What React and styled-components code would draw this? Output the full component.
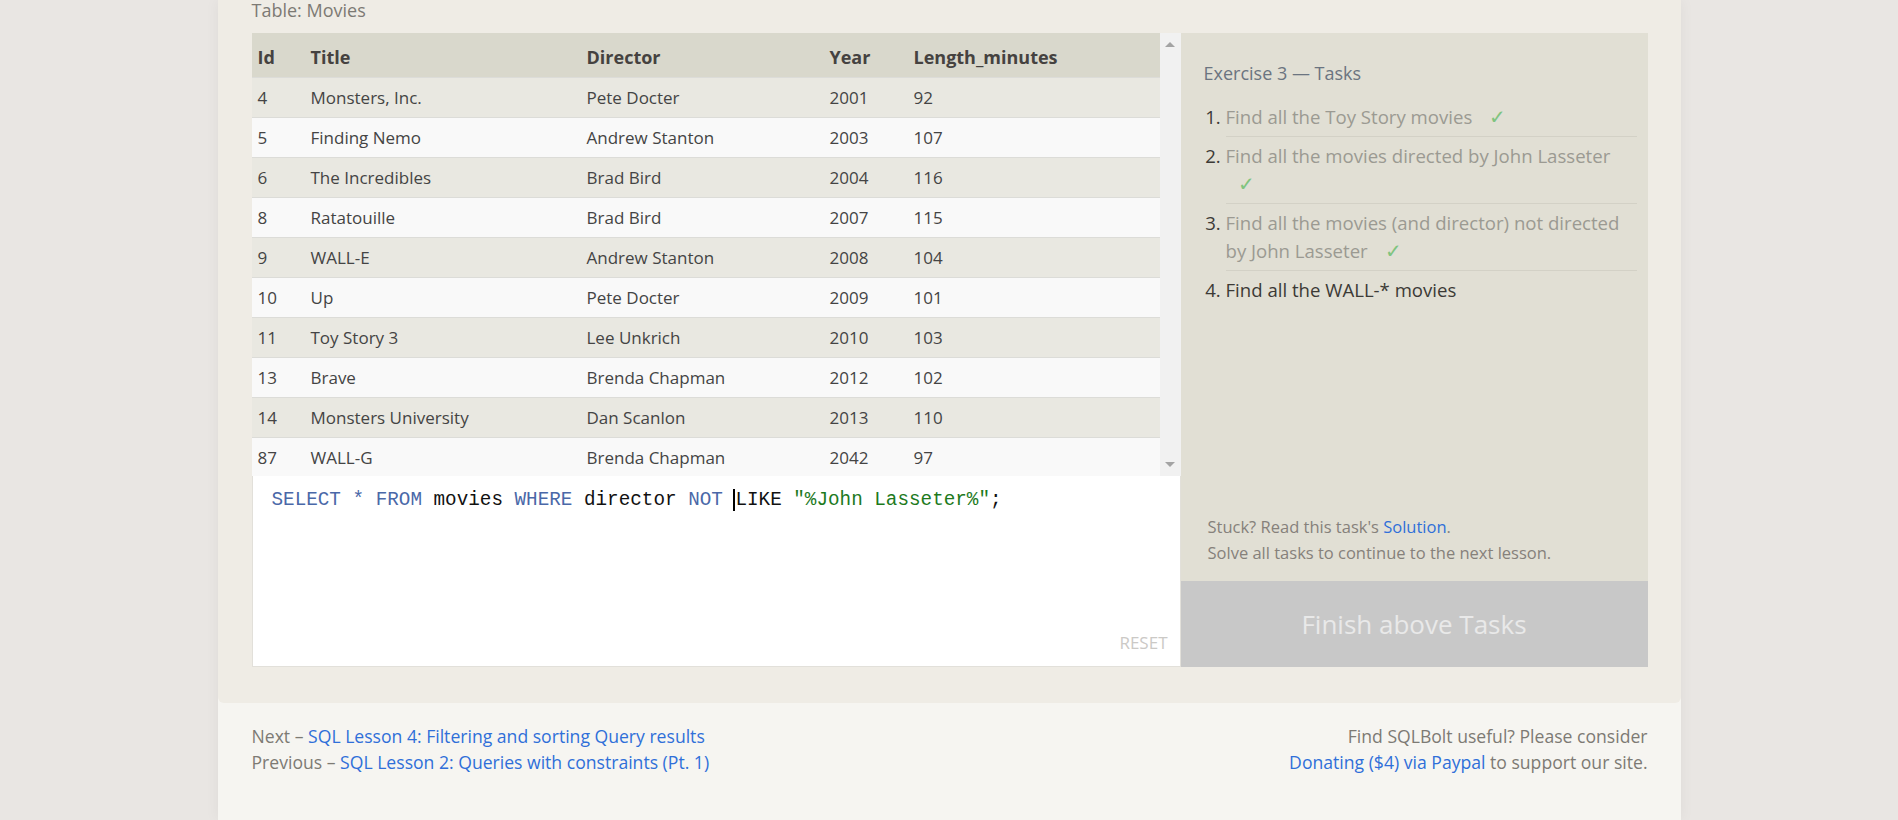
import React from "react";
import styled, { createGlobalStyle } from "styled-components";

const GlobalStyle = createGlobalStyle`
  html, body {
    margin: 0;
    padding: 0;
    background: #e9e6e3;
    font-family: "Open Sans", "Noto Sans", sans-serif;
    overflow: hidden;
  }
`;

const Page = styled.div`
  width: 1463px;
  margin: 0 auto;
  background: #f6f5f1;
  box-shadow: 0 0 14px rgba(0, 0, 0, 0.05);
  min-height: 820px;
`;

const Exercise = styled.section`
  background: #efece5;
  border-radius: 0 0 6px 6px;
  padding: 0 33px 36px 34px;
`;

const Caption = styled.div`
  font-size: 18px;
  line-height: 20px;
  color: #7d7a74;
  height: 33px;
`;

const Workspace = styled.div`
  display: flex;
  align-items: stretch;
`;

const LeftCol = styled.div`
  width: 929px;
  display: flex;
  flex-direction: column;
`;

const TableScroll = styled.div`
  display: flex;
  height: 443px;
  overflow: hidden;
`;

const Table = styled.table`
  width: 908px;
  border-collapse: collapse;
  table-layout: fixed;
  font-size: 17px;
  color: #444;
`;

const Th = styled.th`
  text-align: left;
  font-weight: 700;
  font-size: 18px;
  height: 44px;
  box-sizing: border-box;
  padding: 4px 0 0 6px;
  background: #d9d8cc;
  color: #454240;
`;

const Row = styled.tr`
  background: ${(p) => (p.odd ? "#e9e8e1" : "#f9f9f9")};
  border-top: 1px solid #dcdcd8;
`;

const Td = styled.td`
  height: 39px;
  padding: 0 0 0 6px;
  line-height: 39px;
`;

const Scrollbar = styled.div`
  width: 21px;
  background: #f1f1f1;
  display: flex;
  flex-direction: column;
  justify-content: space-between;
  align-items: center;
  padding: 9px 0;
`;

const Arrow = styled.div`
  width: 0;
  height: 0;
  border-left: 5px solid transparent;
  border-right: 5px solid transparent;
  ${(p) =>
    p.down
      ? "border-top: 5px solid #a3a3a3;"
      : "border-bottom: 5px solid #a3a3a3;"}
`;

const Editor = styled.div`
  height: 191px;
  box-sizing: border-box;
  background: #fff;
  border: 1px solid #e2e0da;
  border-top: none;
  position: relative;
  padding: 11px 0 0 19px;
  font-family: "Liberation Mono", monospace;
  font-size: 19.3px;
  line-height: 26px;
  color: #111;
  white-space: pre;
`;

const Kw = styled.span`
  color: #4a68a8;
`;

const Str = styled.span`
  color: #1d7a1d;
`;

const Caret = styled.span`
  border-left: 2px solid #000;
  margin-left: -1px;
`;

const Reset = styled.div`
  position: absolute;
  right: 12px;
  bottom: 10px;
  font-family: "Open Sans", sans-serif;
  font-size: 17px;
  color: #cbc9c6;
`;

const TaskPanel = styled.aside`
  width: 467px;
  background: #e1dfd4;
  display: flex;
  flex-direction: column;
`;

const TaskBody = styled.div`
  flex: 1;
  padding: 27px 11px 0 23px;
  display: flex;
  flex-direction: column;
`;

const TaskTitle = styled.h3`
  margin: 0 0 12px;
  font-weight: 400;
  font-size: 18px;
  line-height: 26px;
  color: #6b7480;
`;

const TaskList = styled.ol`
  margin: 0;
  padding: 0 0 0 22px;
  font-size: 18.6px;
  line-height: 28px;
`;

const Task = styled.li`
  padding: 5px 0 5px;
  color: ${(p) => (p.done ? "#9b9a92" : "#3c3a36")};
  border-bottom: ${(p) => (p.last ? "none" : "1px solid #d3d1c6")};
  &::marker {
    color: #3c3a36;
  }
`;

const Check = styled.span`
  color: #7fc47f;
  margin-left: 12px;
  font-size: 20px;
`;

const Stuck = styled.div`
  margin-top: auto;
  padding: 0 0 15px 4px;
  font-size: 16.5px;
  line-height: 26px;
  color: #86817b;
`;

const Link = styled.a`
  color: #2f6fd9;
  text-decoration: none;
`;

const FinishButton = styled.div`
  height: 86px;
  background: #c8c8c8;
  color: #e9e9e9;
  font-size: 26px;
  display: flex;
  align-items: center;
  justify-content: center;
`;

const Footer = styled.footer`
  display: flex;
  justify-content: space-between;
  padding: 20px 33px 0 34px;
  font-size: 17.6px;
  line-height: 26px;
  color: #7d7a74;
`;

const FooterRight = styled.div`
  text-align: right;
`;

const movies = [
  [4, "Monsters, Inc.", "Pete Docter", 2001, 92],
  [5, "Finding Nemo", "Andrew Stanton", 2003, 107],
  [6, "The Incredibles", "Brad Bird", 2004, 116],
  [8, "Ratatouille", "Brad Bird", 2007, 115],
  [9, "WALL-E", "Andrew Stanton", 2008, 104],
  [10, "Up", "Pete Docter", 2009, 101],
  [11, "Toy Story 3", "Lee Unkrich", 2010, 103],
  [13, "Brave", "Brenda Chapman", 2012, 102],
  [14, "Monsters University", "Dan Scanlon", 2013, 110],
  [87, "WALL-G", "Brenda Chapman", 2042, 97],
];

const App = () => {
  return (
    <>
      <GlobalStyle />
      <Page>
        <Exercise>
          <Caption>Table: Movies</Caption>
          <Workspace>
            <LeftCol>
              <TableScroll>
                <Table>
                  <colgroup>
                    <col style={{ width: 53 }} />
                    <col style={{ width: 276 }} />
                    <col style={{ width: 243 }} />
                    <col style={{ width: 84 }} />
                    <col />
                  </colgroup>
                  <thead>
                    <tr>
                      <Th>Id</Th>
                      <Th>Title</Th>
                      <Th>Director</Th>
                      <Th>Year</Th>
                      <Th>Length_minutes</Th>
                    </tr>
                  </thead>
                  <tbody>
                    {movies.map((m, i) => (
                      <Row key={m[0]} odd={i % 2 === 0}>
                        {m.map((v, j) => (
                          <Td key={j}>{v}</Td>
                        ))}
                      </Row>
                    ))}
                  </tbody>
                </Table>
                <Scrollbar>
                  <Arrow />
                  <Arrow down />
                </Scrollbar>
              </TableScroll>
              <Editor>
                <Kw>SELECT</Kw> <Kw>*</Kw> <Kw>FROM</Kw> movies <Kw>WHERE</Kw> director <Kw>NOT</Kw>{" "}
                <Caret />LIKE <Str>"%John Lasseter%"</Str>;
                <Reset>RESET</Reset>
              </Editor>
            </LeftCol>
            <TaskPanel>
              <TaskBody>
                <TaskTitle>Exercise 3 — Tasks</TaskTitle>
                <TaskList>
                  <Task done>
                    Find all the Toy Story movies <Check>✓</Check>
                  </Task>
                  <Task done>
                    Find all the movies directed by John Lasseter <Check>✓</Check>
                  </Task>
                  <Task done>
                    Find all the movies (and director) not directed by John Lasseter <Check>✓</Check>
                  </Task>
                  <Task last>Find all the WALL-* movies</Task>
                </TaskList>
                <Stuck>
                  Stuck? Read this task's <Link href="#">Solution</Link>.
                  <br />
                  Solve all tasks to continue to the next lesson.
                </Stuck>
              </TaskBody>
              <FinishButton>Finish above Tasks</FinishButton>
            </TaskPanel>
          </Workspace>
        </Exercise>
        <Footer>
          <div>
            Next – <Link href="#">SQL Lesson 4: Filtering and sorting Query results</Link>
            <br />
            Previous – <Link href="#">SQL Lesson 2: Queries with constraints (Pt. 1)</Link>
          </div>
          <FooterRight>
            Find SQLBolt useful? Please consider
            <br />
            <Link href="#">Donating ($4) via Paypal</Link> to support our site.
          </FooterRight>
        </Footer>
      </Page>
    </>
  );
};

export default App;
